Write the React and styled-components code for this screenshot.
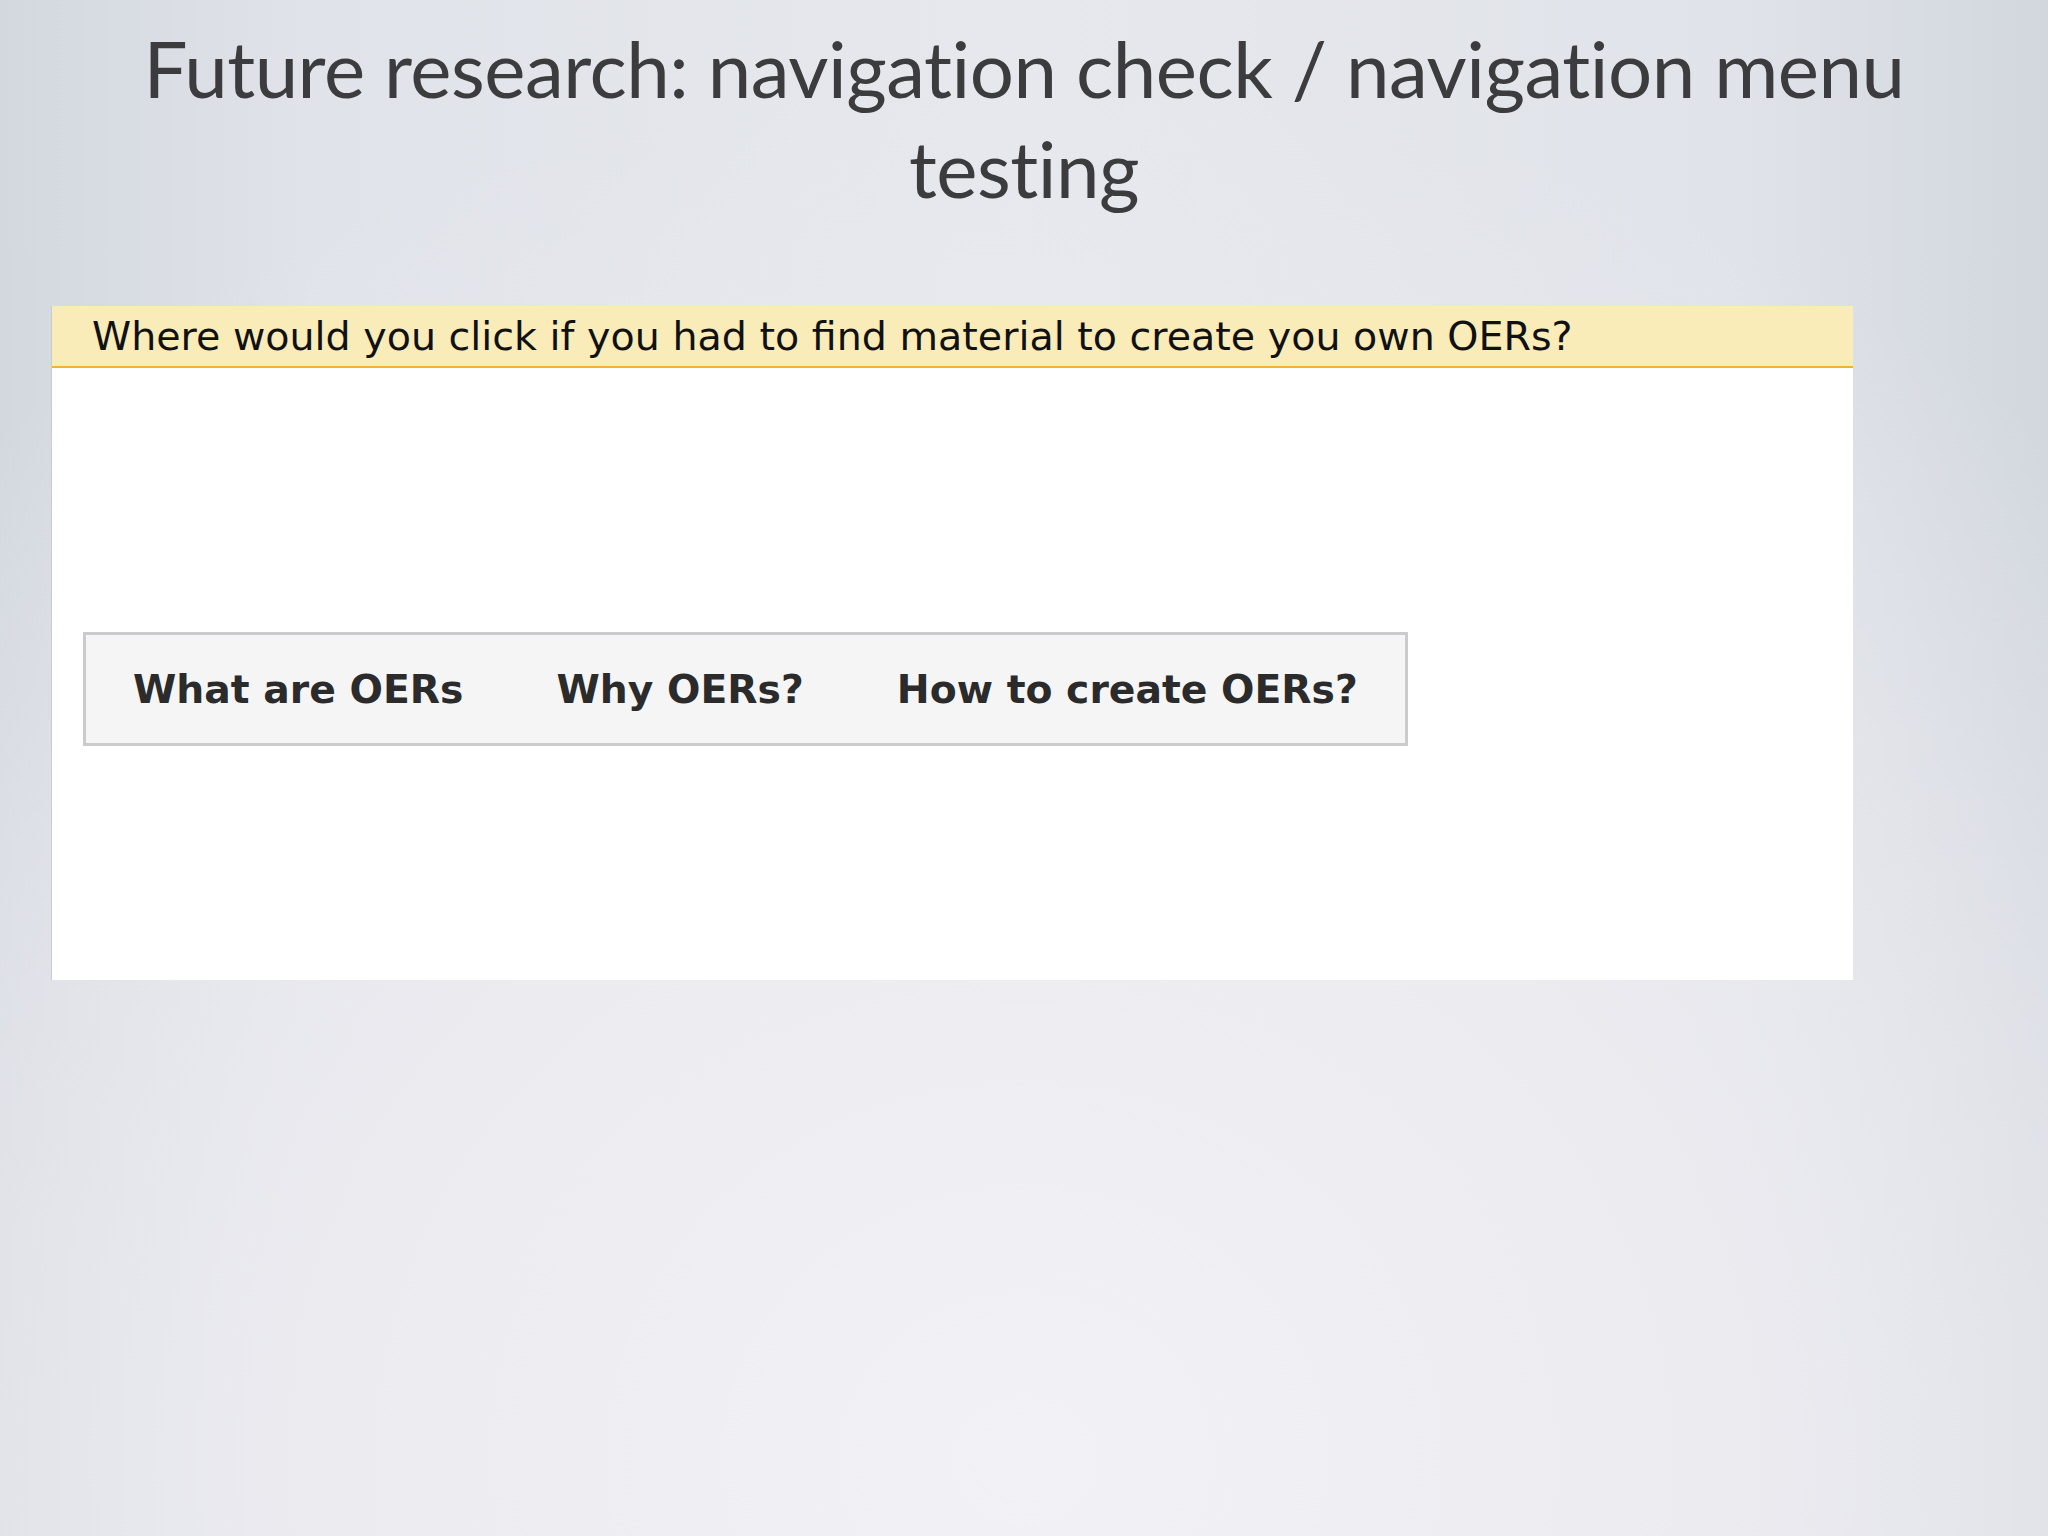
import React from 'react'
import styled, { createGlobalStyle } from 'styled-components'

const GlobalStyle = createGlobalStyle`
  html, body {
    margin: 0;
    padding: 0;
  }
  body {
    width: 2048px;
    height: 1536px;
    overflow: hidden;
  }
`

const Slide = styled.div`
  width: 2048px;
  height: 1536px;
  box-sizing: border-box;
  padding-top: 18px;
  background:
    radial-gradient(ellipse 75% 90% at 50% 95%, #f2f2f6 0%, #ebebf0 45%, rgba(235,235,240,0) 100%),
    linear-gradient(90deg, #d3d8df 0%, #e0e3e9 15%, #e6e8ed 50%, #e0e3e9 85%, #d2d7de 100%);
  display: flex;
  flex-direction: column;
`

const Title = styled.h1`
  margin: 0;
  text-align: center;
  font-family: Lato, "Open Sans", sans-serif;
  font-weight: 400;
  font-size: 78px;
  line-height: 100px;
  color: #3c3c3e;
  letter-spacing: -0.5px;
`

const Panel = styled.div`
  margin: 88px 0 0 51px;
  width: 1801px;
  background: #ffffff;
  border-left: 1px solid #c9cbcf;
`

const Question = styled.div`
  height: 60px;
  box-sizing: content-box;
  background: #f9ecb8;
  border-bottom: 2px solid #efb435;
  padding-left: 40px;
  display: flex;
  align-items: center;
  font-family: "DejaVu Sans", Verdana, sans-serif;
  font-size: 39.6px;
  color: #111111;
`

const Body = styled.div`
  height: 612px;
  box-sizing: border-box;
  padding: 264px 0 0 31px;
`

const Menu = styled.nav`
  display: inline-flex;
  align-items: center;
  gap: 93px;
  height: 114px;
  box-sizing: border-box;
  padding: 0 47px;
  background: #f6f5f6;
  border: 3px solid #cbcacc;
`

const MenuItem = styled.span`
  font-family: "DejaVu Sans", Verdana, sans-serif;
  font-weight: 700;
  font-size: 39.3px;
  color: #2b2b2b;
  white-space: nowrap;
`

const items = ['What are OERs', 'Why OERs?', 'How to create OERs?']

const App = () => {
  return (
    <>
      <GlobalStyle />
      <Slide>
        <Title>
          Future research: navigation check / navigation menu
          <br />
          testing
        </Title>
        <Panel>
          <Question>Where would you click if you had to find material to create you own OERs?</Question>
          <Body>
            <Menu>
              {items.map(item => (
                <MenuItem key={item}>{item}</MenuItem>
              ))}
            </Menu>
          </Body>
        </Panel>
      </Slide>
    </>
  )
}

export default App
